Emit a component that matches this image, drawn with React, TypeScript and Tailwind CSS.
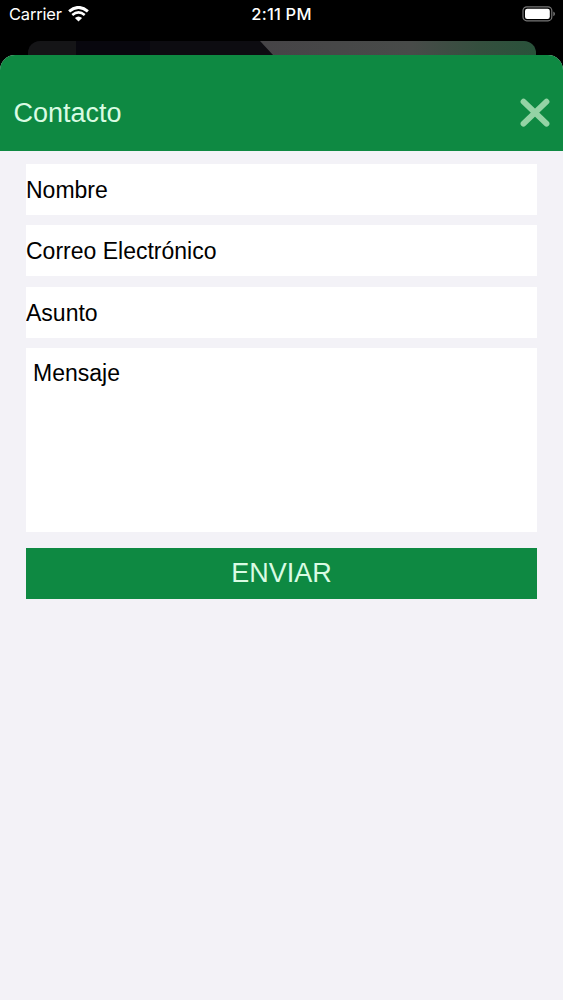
import React from "react";

function WifiIcon() {
  return (
    <svg width="21" height="16" viewBox="0 0 21 16" fill="none" className="ml-[6px] shrink-0">
      <path d="M1.1 5.4Q10.5 -2.6 19.9 5.4" stroke="white" strokeWidth="2.9" />
      <path d="M4.3 8.9Q10.5 3.7 16.7 8.9" stroke="white" strokeWidth="2.6" />
      <path d="M10.5 15.6L6.9 12Q10.5 8.8 14.1 12Z" fill="white" />
    </svg>
  );
}

function BatteryIcon() {
  return (
    <svg width="34" height="16" viewBox="0 0 34 16" fill="none">
      <rect x="1" y="0.8" width="28.8" height="14" rx="3.8" stroke="#777777" strokeWidth="1.2" />
      <rect x="3" y="2.7" width="24.8" height="10.2" rx="2.2" fill="white" />
      <path d="M31.3 5.4Q33 6.1 33 7.8Q33 9.5 31.3 10.2Z" fill="#777777" />
    </svg>
  );
}

function StatusBar() {
  return (
    <div className="grid h-[41px] grid-cols-3 items-start font-['Inter',sans-serif] text-[16.5px] leading-[20px] text-white">
      <div className="flex items-center pt-[4px] pl-[9px]">
        <span className="tracking-[-0.2px]">Carrier</span>
        <WifiIcon />
      </div>
      <span className="pt-[4px] text-center font-medium tracking-[0.2px]">2:11 PM</span>
      <div className="flex justify-end pt-[6px] pr-[7px]">
        <BatteryIcon />
      </div>
    </div>
  );
}

function BackgroundCard() {
  return (
    <div className="mr-[27px] ml-[28px] h-[13.5px] overflow-hidden rounded-t-[12px] bg-[#08070e]">
      <svg width="508" height="14" viewBox="0 0 508 14" preserveAspectRatio="none">
        <defs>
          <linearGradient id="card-light" x1="0" x2="1">
            <stop offset="0" stopColor="#464447" />
            <stop offset="0.55" stopColor="#484b49" />
            <stop offset="0.8" stopColor="#344f3e" />
            <stop offset="1" stopColor="#29523a" />
          </linearGradient>
        </defs>
        <path d="M0 0H48V14H0Z" fill="#151517" />
        <path d="M122 0H232L245 14H122Z" fill="#0d0c11" />
        <path d="M232 0H508V14H245Z" fill="url(#card-light)" />
      </svg>
    </div>
  );
}

const fieldClass =
  "block w-full rounded-none bg-white text-[23px] leading-[28px] text-black outline-none placeholder:text-black placeholder:opacity-100";

function TextField({ label }: { label: string }) {
  return <input aria-label={label} placeholder={label} className={`${fieldClass} h-[51px] pt-[2px]`} />;
}

export default function App() {
  return (
    <div className="flex h-[1000px] w-full flex-col overflow-hidden bg-black font-['Liberation_Sans',sans-serif]">
      <StatusBar />
      <BackgroundCard />
      <main className="flex-1 overflow-hidden rounded-t-[15px] bg-[#f3f2f7]">
        <header className="flex h-[96px] items-center justify-between bg-[#0e8942] pt-[20px] pr-[13px] pl-[13.5px]">
          <h1 className="text-[27px] leading-[32px] text-[#d9fbe3]">Contacto</h1>
          <button aria-label="Cerrar">
            <svg width="30" height="30" viewBox="0 0 30 30" fill="none">
              <path d="M3.5 3.7L26.5 25.7M26.5 3.7L3.5 25.7" stroke="#94d3a5" strokeWidth="5.8" strokeLinecap="round" />
            </svg>
          </button>
        </header>
        <form className="px-[26px] pt-[13.5px]">
          <div className="flex flex-col gap-[10.3px]">
            <TextField label="Nombre" />
            <TextField label="Correo Electrónico" />
            <TextField label="Asunto" />
            <textarea
              aria-label="Mensaje"
              placeholder="Mensaje"
              className={`${fieldClass} h-[184px] resize-none px-[7px] pt-[11px]`}
            />
          </div>
          <button
            type="button"
            className="mt-[15.7px] block h-[51px] w-full bg-[#0e8942] text-[27px] leading-[51px] text-[#d9fbe3]"
          >
            ENVIAR
          </button>
        </form>
      </main>
    </div>
  );
}
